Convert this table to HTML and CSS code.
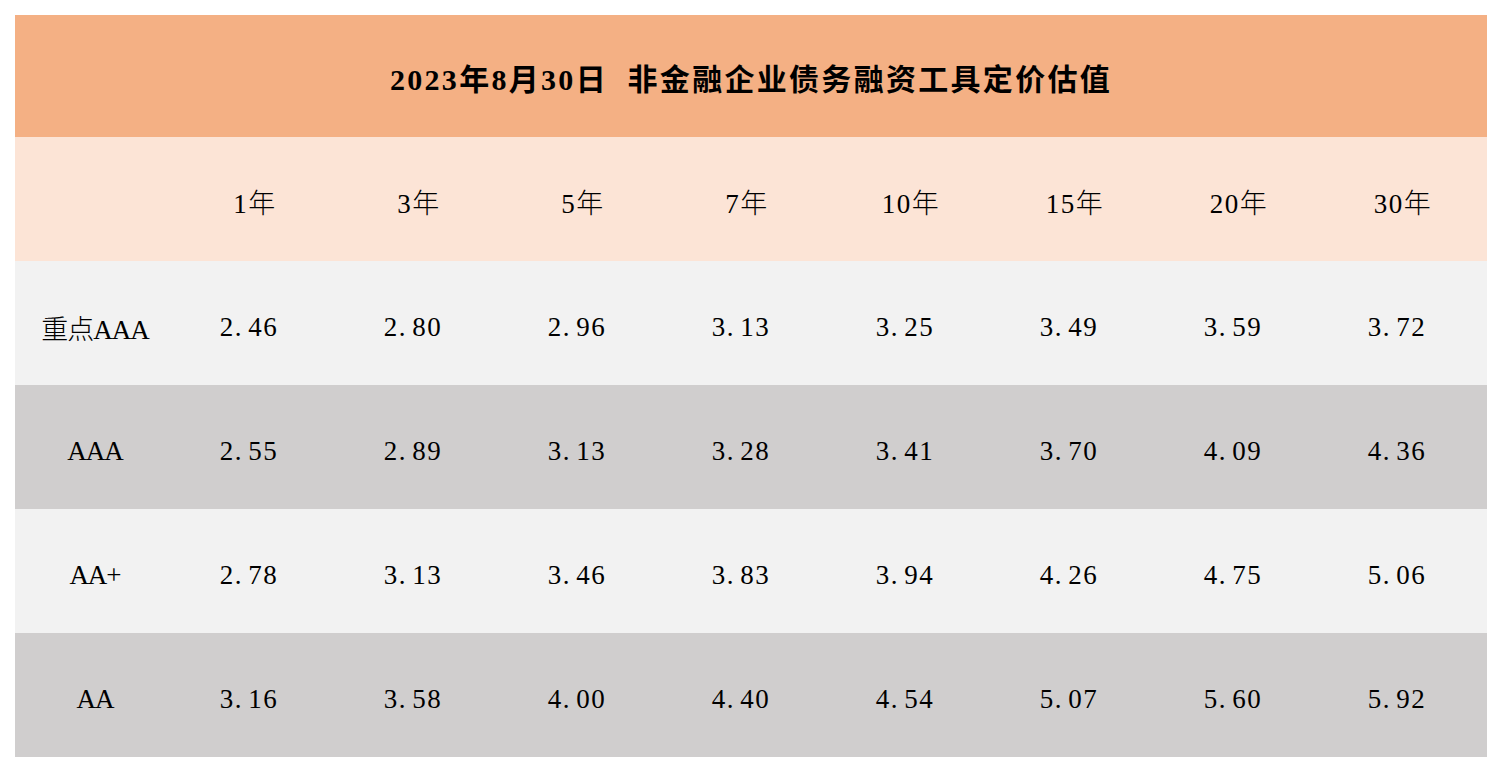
FILE: index.html
```html
<!DOCTYPE html>
<html lang="zh-CN">
<head>
<meta charset="utf-8">
<title>非金融企业债务融资工具定价估值</title>
<link rel="stylesheet" href="styles.css">
</head>
<body>
<div class="sheet">
  <div class="title">2023年8月30日&nbsp;&nbsp;非金融企业债务融资工具定价估值</div>

  <div class="cell head label"></div>
  <div class="cell head">1年</div>
  <div class="cell head">3年</div>
  <div class="cell head">5年</div>
  <div class="cell head">7年</div>
  <div class="cell head">10年</div>
  <div class="cell head">15年</div>
  <div class="cell head">20年</div>
  <div class="cell head">30年</div>

  <div class="cell light label">重点AAA</div>
  <div class="cell light num">2<span class="dot">.</span>46</div>
  <div class="cell light num">2<span class="dot">.</span>80</div>
  <div class="cell light num">2<span class="dot">.</span>96</div>
  <div class="cell light num">3<span class="dot">.</span>13</div>
  <div class="cell light num">3<span class="dot">.</span>25</div>
  <div class="cell light num">3<span class="dot">.</span>49</div>
  <div class="cell light num">3<span class="dot">.</span>59</div>
  <div class="cell light num">3<span class="dot">.</span>72</div>

  <div class="cell dark label">AAA</div>
  <div class="cell dark num">2<span class="dot">.</span>55</div>
  <div class="cell dark num">2<span class="dot">.</span>89</div>
  <div class="cell dark num">3<span class="dot">.</span>13</div>
  <div class="cell dark num">3<span class="dot">.</span>28</div>
  <div class="cell dark num">3<span class="dot">.</span>41</div>
  <div class="cell dark num">3<span class="dot">.</span>70</div>
  <div class="cell dark num">4<span class="dot">.</span>09</div>
  <div class="cell dark num">4<span class="dot">.</span>36</div>

  <div class="cell light label">AA+</div>
  <div class="cell light num">2<span class="dot">.</span>78</div>
  <div class="cell light num">3<span class="dot">.</span>13</div>
  <div class="cell light num">3<span class="dot">.</span>46</div>
  <div class="cell light num">3<span class="dot">.</span>83</div>
  <div class="cell light num">3<span class="dot">.</span>94</div>
  <div class="cell light num">4<span class="dot">.</span>26</div>
  <div class="cell light num">4<span class="dot">.</span>75</div>
  <div class="cell light num">5<span class="dot">.</span>06</div>

  <div class="cell dark label">AA</div>
  <div class="cell dark num">3<span class="dot">.</span>16</div>
  <div class="cell dark num">3<span class="dot">.</span>58</div>
  <div class="cell dark num">4<span class="dot">.</span>00</div>
  <div class="cell dark num">4<span class="dot">.</span>40</div>
  <div class="cell dark num">4<span class="dot">.</span>54</div>
  <div class="cell dark num">5<span class="dot">.</span>07</div>
  <div class="cell dark num">5<span class="dot">.</span>60</div>
  <div class="cell dark num">5<span class="dot">.</span>92</div>
</div>
</body>
</html>
```

FILE: styles.css
```css
html, body {
  margin: 0;
  padding: 0;
  background: #ffffff;
}

body {
  font-family: "Liberation Serif", "Noto Sans CJK SC", serif;
  color: #000000;
}

.sheet {
  margin: 15px 0 0 15px;
  width: 1472px;
  display: grid;
  grid-template-columns: 160px repeat(8, 164px);
  grid-template-rows: 122px repeat(5, 124px);
}

.title {
  grid-column: 1 / -1;
  background: #f4b084;
  display: flex;
  align-items: center;
  justify-content: center;
  font-size: 30px;
  font-weight: bold;
  letter-spacing: 2.3px;
  padding-top: 2px;
  box-sizing: border-box;
}

.cell {
  display: flex;
  align-items: center;
  justify-content: center;
  font-size: 27px;
  letter-spacing: 1.5px;
  padding-top: 8px;
  box-sizing: border-box;
  font-weight: 300;
  white-space: nowrap;
}

.head {
  background: #fce4d6;
  padding-right: 4px;
  padding-top: 4px;
}

.light {
  background: #f2f2f2;
}

.dark {
  background: #d0cece;
}

.label {
  padding-right: 0;
  letter-spacing: -1px;
}

.num {
  padding-right: 16px;
}

.dot {
  display: inline-block;
  width: 13.5px;
}
```
